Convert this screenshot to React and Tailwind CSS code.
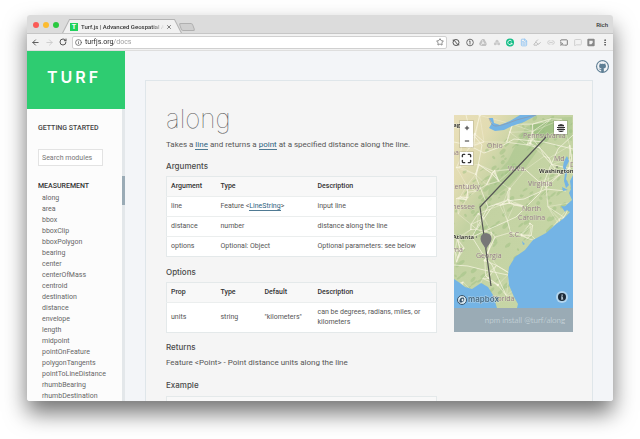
import React from "react";
import {
  ArrowLeft, ArrowRight, RotateCw, Info, Star, X, Cast, MoreVertical, FileText,
  Highlighter, Link2, MessageSquare, Plus, Minus, Maximize,
} from "lucide-react";
import { FaGithub, FaGoogleDrive } from "react-icons/fa";

const modules = [
  "along", "area", "bbox", "bboxClip", "bboxPolygon", "bearing", "center",
  "centerOfMass", "centroid", "destination", "distance", "envelope", "length",
  "midpoint", "pointOnFeature", "polygonTangents", "pointToLineDistance",
  "rhumbBearing", "rhumbDestination",
];

// Small seeded generator so that the terrain is the same on every load.
function seeded(seed) {
  let s = seed;
  return () => {
    s = (s * 16807) % 2147483647;
    return s / 2147483647;
  };
}

const rand = seeded(421);
const woods = Array.from({ length: 260 }, () => ({
  x: rand() * 125 - 3,
  y: rand() * 193,
  rx: 1 + rand() * 3,
  ry: 0.5 + rand() * 1.5,
  a: -50 + rand() * 20,
}));
const towns = Array.from({ length: 130 }, () => [rand() * 123 - 2, rand() * 193]);
const roads = towns.flatMap((p, i) =>
  towns
    .map((q, j) => ({ i, j, p, q, d: Math.hypot(p[0] - q[0], p[1] - q[1]) }))
    .filter((r) => r.j !== i)
    .sort((a, b) => a.d - b.d)
    .slice(0, 4)
);

const places = [
  ["Ohio", 33, 33], ["Pennsylvania", 69, 23], ["W.Va.", 54, 56], ["Md", 100, 46],
  ["Virginia", 74, 71], ["North", 68, 96], ["Carolina", 64, 105], ["S.C.", 55, 122],
  ["Georgia", 22, 143], ["Florida", 38, 186], ["De", 116, 52],
];
const clipped = [["Kentucky", 26, 74], ["Tennessee", 21, 94], ["Indiana", 5, 40], ["Alabama", 9, 137]];

function MapDrawing() {
  return (
    <svg viewBox="0 0 119 193" className="block w-full" role="img" aria-label="Map of the eastern United States">
      <defs>
        <linearGradient id="plain" x1="0" y1="0" x2="1" y2="1">
          <stop offset="0" stopColor="#e9dfb9" />
          <stop offset="0.18" stopColor="#e2dcb2" />
          <stop offset="0.34" stopColor="#c3d2a2" />
          <stop offset="1" stopColor="#c9d8a8" />
        </linearGradient>
      </defs>
      <rect width="119" height="193" fill="url(#plain)" />
      <g fill="#9fc083" opacity="0.5">
        {woods.filter((w) => w.x + w.y > 60).map((w, i) => (
          <ellipse key={i} cx={w.x} cy={w.y} rx={w.rx} ry={w.ry} transform={`rotate(${w.a} ${w.x} ${w.y})`} />
        ))}
      </g>
      <path d="M36 66L54 46L62 30L72 12L95 3L118 2V26L98 20L86 32L72 52L56 70L42 80L34 80Z" fill="#93bc7c" opacity="0.3" />
      <path d="M76 10L102 5L105 14L90 22L78 18Z" fill="#84b26c" opacity="0.4" />
      <g stroke="#f9f6e4" fill="none" opacity="0.9">
        {roads.map((r, i) => (
          <line key={i} x1={r.p[0]} y1={r.p[1]} x2={r.q[0]} y2={r.q[1]} strokeWidth={i % 6 === 0 ? 0.7 : 0.4} />
        ))}
        <path strokeWidth="0.800" d="M0 27L14 30L30 38L46 32L60 24L90 27L119 34M12 0L16 16L28 30L22 62L34 92L18 122L28 138L38 150L52 180M119 20L104 34L96 52L86 78L62 102L40 112L18 122M34 92L52 86L70 84L92 74L112 76M0 150L14 151L30 155L54 160" />
      </g>
      <g fill="#f8f5e2">
        {towns.filter((_, i) => i % 3 === 0).map(([x, y], i) => (
          <circle key={i} cx={x} cy={y} r={i % 4 === 0 ? 1.2 : 0.7} />
        ))}
      </g>
      <g fill="#74b4e5">
        <path d="M35 3L38 8L35 13L41 16L50 15L58 11L70 7L83 0H66L56 6L46 10L40 8L39 3Z" />
        <path d="M119 60L116 66L117 74L115 78L118 85L109 93L116 97L110 103L101 110L92 118L79 125L71 135L61 142L55 152L54 160L55 170L60 182L64 189L63 193H119Z" />
        <path d="M0 164L6 168L11 172L18 174L27 168L34 172L39 180L43 193H0Z" />
        <path d="M113 41L115 46L112 52L113 58L112 64L115 70L112 73L110 66L111 58L109 52L110 46Z" />
        <path d="M108 72L114 75L109 76ZM107 91L115 92L111 97ZM68 126L71 129L69 130Z" />
      </g>
      <path d="M35 3C37 8 38 11 42 11C52 10 58 6 66 4L82 0" fill="none" stroke="#8f96a5" strokeWidth="0.7" />
      <g className="font-['Open_Sans',sans-serif] text-[7px]" fill="#957c87" stroke="#e4e8cc" strokeOpacity="0.4" strokeWidth="1" paintOrder="stroke">
        {places.map(([name, x, y]) => <text key={name} x={x} y={y}>{name}</text>)}
        {clipped.map(([name, x, y]) => <text key={name} x={x} y={y} textAnchor="end">{name}</text>)}
      </g>
      <g className="font-['Open_Sans',sans-serif] text-[6px] font-semibold" fill="#222" stroke="#f5f3e4" strokeOpacity="0.7" strokeWidth="1" paintOrder="stroke">
        <text x="85" y="58">Washington</text>
        <text x="20" y="124" textAnchor="end">Atlanta</text>
        <text x="6" y="12" textAnchor="end">Chicag</text>
      </g>
      <circle cx="103" cy="52" r="0.800" fill="#666" />
      <circle cx="22.500" cy="122" r="0.700" fill="#666" />
      <path d="M92 22L26 92L37 171" fill="none" stroke="#555" strokeWidth="1.2" />
      <path d="M32 135C31 131 26.500 128 26.500 123.500A5.500 5.500 0 0 1 37.500 123.500C37.500 128 33 131 32 135Z" fill="#777" />
      <circle cx="8" cy="185" r="4.500" fill="#dceaf2" stroke="#35536b" strokeWidth="1" />
      <path d="M5.500 187.500C5 183.500 7 182 9.500 182.500C11.500 185 9.500 188 5.500 187.500Z" fill="#35536b" />
      <path d="M8.500 183.200L9 184.600L10.200 185L9 185.500L8.500 186.700L8 185.500L6.800 185L8 184.600Z" fill="#fff" />
      <text x="14" y="187" className="font-['Inter',sans-serif] text-[8px] font-semibold" fill="#486b83" stroke="#dceaf2" strokeOpacity="0.6" strokeWidth="1" paintOrder="stroke">mapbox</text>
    </svg>
  );
}

const mapButton = "flex h-[13px] w-[13px] items-center justify-center bg-white text-[#333]";
const mapControl = "absolute shadow-[0_0_0_1px_rgba(0,0,0,0.1)]";

function MapCard() {
  return (
    <aside className="mt-[34px] w-[119px] shrink-0 self-start">
      <div className="relative overflow-hidden">
        <MapDrawing />
        <div className={`${mapControl} left-[6px] top-[6px]`}>
          <button aria-label="Zoom in" className={mapButton}><Plus size={6} strokeWidth={4} /></button>
          <button aria-label="Zoom out" className={mapButton}><Minus size={6} strokeWidth={4} /></button>
        </div>
        <div className={`${mapControl} left-[6px] top-[37px]`}>
          <button aria-label="Full screen" className={mapButton}><Maximize size={11} strokeWidth={3} /></button>
        </div>
        <div className={`${mapControl} right-[6px] top-[6px]`}>
          <button aria-label="Layers" className={mapButton}>
            <svg viewBox="0 0 8 8" className="h-[8px] w-[8px]" fill="#333">
              <path d="M4 0L7 1V2H1V1ZM0 3H8V4H0ZM0 5H8V6H0ZM1 7H7L5 8H3Z" />
              <path d="M1 1H7V7H1Z" opacity="0.35" />
            </svg>
          </button>
        </div>
        <button aria-label="Attribution" className="absolute bottom-[5px] right-[5px] flex h-[12px] w-[12px] items-center justify-center rounded-full bg-[#b3d6ef]">
          <svg viewBox="0 0 16 16" className="h-[8px] w-[8px]">
            <circle cx="8" cy="8" r="8" fill="#1d2b38" />
            <path d="M7 3H9.500V5.500H7ZM6 7H9.500V11.500H10.500V13H6V11.500H7V8.500H6Z" fill="#d5e8f5" />
          </svg>
        </button>
      </div>
      <p className="bg-[#9aabb5] pr-[8px] text-right font-['Lato',sans-serif] text-[8px] font-light leading-[24px] text-[#d8e0e4]">
        npm install @turf/along
      </p>
    </aside>
  );
}

function DocLink({ children }) {
  return <a href="#" className="border-b border-[#4f7a93] text-[#2d6180]">{children}</a>;
}

function Heading({ children }) {
  return <h2 className="font-['Inter',sans-serif] text-[8px] font-medium leading-[12px] text-[#4a4a4a]">{children}</h2>;
}

function DataTable({ label, cols, head, rows }) {
  return (
    <table aria-label={label} className="w-full table-fixed border-collapse border border-[#e4e9ea] text-left text-[7px] leading-[10px] text-[#555]">
      <colgroup>{cols.map((c, i) => <col key={i} className={c} />)}</colgroup>
      <thead>
        <tr className="bg-[#f8f8f8]">
          {head.map((h) => <th key={h} scope="col" className="px-[4px] pb-[5px] pt-[4px] font-medium text-[#333]">{h}</th>)}
        </tr>
      </thead>
      <tbody>
        {rows.map((r, i) => (
          <tr key={i} className="border-t border-[#ebeeee] bg-white">
            {r.map((c, j) => <td key={j} className="px-[4px] pb-[5px] pt-[4px]">{c}</td>)}
          </tr>
        ))}
      </tbody>
    </table>
  );
}

function BrowserChrome() {
  return (
    <header className="shrink-0 font-['Roboto',sans-serif]">
      <div className="flex h-[18px] items-end bg-[#dcdcdc] pl-[6px] pr-[5px]">
        <div className="flex h-full items-center gap-[4px] pb-px pt-[3px]">
          <span className="h-[6px] w-[6px] rounded-full bg-[#fb5b57]" />
          <span className="h-[6px] w-[6px] rounded-full bg-[#fcbc31]" />
          <span className="h-[6px] w-[6px] rounded-full bg-[#29c93f]" />
        </div>
        <div className="ml-[3px] h-[14px] w-[120px] bg-[#b4b4b4] pt-px [clip-path:polygon(6%_0,94%_0,100%_100%,0_100%)]">
          <div className="flex h-full items-center bg-[#f1f1f1] pl-[8px] pr-[10px] [clip-path:polygon(6.5%_0,93.5%_0,99%_100%,1%_100%)]">
            <span className="flex h-[8px] w-[8px] items-center justify-center bg-[#1fd15c] text-[7px] font-bold leading-[8px] text-white">T</span>
            <span className="ml-[3px] min-w-0 flex-1 overflow-hidden whitespace-nowrap text-[6px] font-medium leading-[10px] text-[#333] [mask-image:linear-gradient(to_right,#000_85%,transparent)]">
              Turf.js | Advanced Geospatial A
            </span>
            <button aria-label="Close tab" className="ml-[2px]"><X size={6} strokeWidth={3} color="#555" /></button>
          </div>
        </div>
        <button aria-label="New tab" className="mb-[2px] -ml-[2px] h-[8px] w-[14px] skew-x-[20deg] rounded-xs border border-[#b0b0b0] bg-[#cfcfcf]" />
        <span className="ml-auto pb-[3px] text-[6px] font-medium leading-[10px] text-[#333]">Rich</span>
      </div>
      <div className="flex h-[18px] items-center border-b border-t border-b-[#dedede] border-t-[#c6c6c6] bg-[#f2f2f2] pl-[4px] pr-[4px]">
        <div className="flex shrink-0 items-center gap-[5px]">
          <button aria-label="Back"><ArrowLeft size={9} strokeWidth={2.5} color="#555" /></button>
          <button aria-label="Forward"><ArrowRight size={9} strokeWidth={2.5} color="#ccc" /></button>
          <button aria-label="Reload"><RotateCw size={8} strokeWidth={3} color="#555" /></button>
        </div>
        <div className="ml-[5px] flex h-[13px] min-w-0 flex-1 items-center rounded-xs border border-[#d0d0d0] bg-white px-[2px]">
          <Info size={7} strokeWidth={2.5} color="#555" />
          <input
            aria-label="Address"
            defaultValue="turfjs.org/docs"
            className="ml-[3px] h-[11px] min-w-0 flex-1 bg-[linear-gradient(90deg,#222_29px,#999_29px)] bg-clip-text text-[7px] leading-[11px] text-transparent outline-none"
          />
          <button aria-label="Bookmark"><Star size={8} strokeWidth={2} color="#555" /></button>
        </div>
        <div className="ml-[5px] flex w-[157px] shrink-0 items-center justify-between [&>svg]:h-[9px] [&>svg]:w-[8px]">
          <svg viewBox="0 0 24 24" fill="none" stroke="#555" strokeWidth="3">
            <circle cx="12" cy="12" r="9" /><path d="M7 6L17 18M2 5H8M16 19H22" />
          </svg>
          <svg viewBox="0 0 24 24" fill="none" stroke="#666" strokeWidth="2.800">
            <circle cx="12" cy="12" r="10" /><path d="M12 7V18M9 8H12" />
          </svg>
          <FaGoogleDrive color="#c2c2c2" />
          <svg viewBox="0 0 24 24" fill="#c8c8c8">
            <circle cx="12" cy="8" r="4.500" /><circle cx="7" cy="16" r="4.500" /><circle cx="17" cy="16" r="4.500" />
          </svg>
          <svg viewBox="0 0 24 24" fill="none">
            <circle cx="12" cy="12" r="12" fill="#14bd86" />
            <path d="M17 8A6.500 6.500 0 1 0 18 14H13M18 14V18" stroke="#fff" strokeWidth="2.500" />
          </svg>
          <FileText color="#8dc3f2" strokeWidth={2.5} />
          <Highlighter color="#b5b5b5" strokeWidth={2.5} />
          <Link2 color="#c9c9c9" strokeWidth={2.5} />
          <Cast color="#666" strokeWidth={2.5} />
          <MessageSquare color="#cfcfcf" strokeWidth={3} />
          <svg viewBox="0 0 24 24">
            <rect x="1" y="1" width="22" height="22" rx="3" fill="#888" />
            <path d="M7 7H17V13L13 17H7Z" fill="#f2f2f2" />
          </svg>
          <MoreVertical color="#555" strokeWidth={3} />
        </div>
      </div>
    </header>
  );
}

export default function App() {
  return (
    <div className="flex h-screen flex-col bg-white px-[27px] pb-[38px] pt-[15px]">
      <div className="flex min-h-0 flex-1 flex-col overflow-hidden rounded-[3px] shadow-[0_12px_22px_rgba(0,0,0,0.55)]">
        <BrowserChrome />
        <div className="flex min-h-0 flex-1 font-['Roboto',sans-serif]">
          <nav className="flex w-[98px] shrink-0 flex-col bg-[#fcfcfc] text-[#666]">
            <div className="bg-[#2ecc71] pl-[20px] font-['Inter',sans-serif] text-[16px] font-semibold leading-[52px] tracking-[3px] text-white">
              <a href="#" className="block pb-[6px]">TURF</a>
            </div>
            <div className="flex min-h-0 flex-1">
              <div className="min-w-0 flex-1 overflow-hidden pl-[11px] pt-[14px]">
                <h2 className="text-[7px] font-medium leading-[10px] text-[#444]">GETTING STARTED</h2>
                <input
                  aria-label="Search modules"
                  placeholder="Search modules"
                  className="mt-[16px] block h-[17px] w-[65px] border border-[#e3e3e3] bg-white px-[3px] text-[7px] outline-none placeholder:text-[#777]"
                />
                <h2 className="mt-[15px] text-[7px] font-medium leading-[10px] text-[#333]">MEASUREMENT</h2>
                <ul className="pl-[4px] pt-[2px] text-[7px] leading-[11px]">
                  {modules.map((m) => <li key={m}><a href="#">{m}</a></li>)}
                </ul>
              </div>
              <div className="w-[3px] bg-[#e3e7ea] pt-[67px]">
                <div className="h-[29px] bg-[#9aabb6]" />
              </div>
            </div>
          </nav>
          <main className="flex min-w-0 flex-1 flex-col overflow-hidden bg-[#f3f5f8]">
            <div className="flex h-[29px] shrink-0 justify-end pr-[4px] pt-[9px]">
              <a href="#" aria-label="GitHub" className="flex h-[13px] w-[13px] items-center justify-center rounded-full bg-[#5f7f95]">
                <FaGithub size={11} color="#f3f5f8" />
              </a>
            </div>
            <div className="mx-[20px] flex min-h-0 flex-1 gap-[17px] border border-b-0 border-[#dfe6ea] bg-[#f5f5f5] pl-[20px] pr-[19px]">
              <article className="min-w-0 flex-1 text-[8px] leading-[12px] text-[#555]">
                <h1 className="mt-[23px] font-['Inter',sans-serif] text-[26px] font-thin leading-[30px] text-[#555]">along</h1>
                <p className="mb-[9px] mt-[5px]">
                  Takes a <DocLink>line</DocLink> and returns a <DocLink>point</DocLink> at a specified distance along the line.
                </p>
                <Heading>Arguments</Heading>
                <div className="mb-[9px] mt-[4px]">
                  <DataTable
                    label="Arguments"
                    cols={["w-[50px]", "w-[97px]", "w-auto"]}
                    head={["Argument", "Type", "Description"]}
                    rows={[
                      ["line", <>Feature &lt;<DocLink>LineString</DocLink>&gt;</>, "input line"],
                      ["distance", "number", "distance along the line"],
                      ["options", "Optional: Object", "Optional parameters: see below"],
                    ]}
                  />
                </div>
                <Heading>Options</Heading>
                <div className="mb-[8px] mt-[4px]">
                  <DataTable
                    label="Options"
                    cols={["w-[50px]", "w-[44px]", "w-[53px]", "w-auto"]}
                    head={["Prop", "Type", "Default", "Description"]}
                    rows={[["units", "string", "\"kilometers\"", "can be degrees, radians, miles, or kilometers"]]}
                  />
                </div>
                <Heading>Returns</Heading>
                <p className="mb-[10px] mt-[4px]">Feature &lt;Point&gt; - Point distance units along the line</p>
                <Heading>Example</Heading>
                <div className="mt-[5px] h-[40px] border border-[#e4e9ea] bg-[#f8f8f8]" />
              </article>
              <MapCard />
            </div>
          </main>
        </div>
      </div>
    </div>
  );
}
